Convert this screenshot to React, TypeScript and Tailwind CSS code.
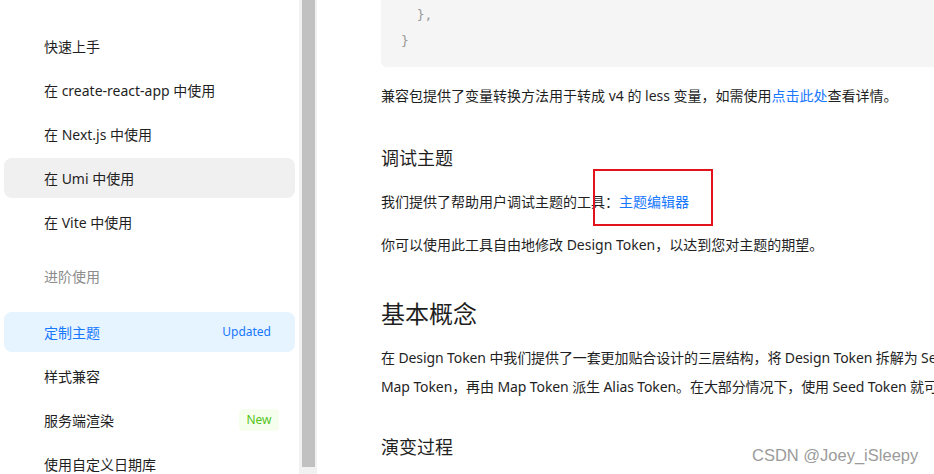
import React from "react";

const font = { fontFamily: '"Noto Sans", "Noto Sans CJK SC", sans-serif' };

function Item({ label, active, selected, badge }: { label: string; active?: boolean; selected?: boolean; badge?: React.ReactNode }) {
  return (
    <div
      className={
        "mx-[4px] mb-[4px] h-[40px] rounded-[8px] pl-[40px] pr-[16px] flex items-center justify-between text-[14px] " +
        (selected ? "bg-[#e6f4ff] text-[#1677ff]" : active ? "bg-[#f0f0f0] text-[#1f1f1f]" : "text-[#1f1f1f]")
      }
    >
      <span>{label}</span>
      {badge}
    </div>
  );
}

export default function App() {
  return (
    <div className="w-[934px] h-[474px] overflow-hidden flex bg-white relative" style={font}>
      {/* Sidebar */}
      <div className="w-[299px] shrink-0 flex flex-col">
        <div className="mt-[14px] ml-[44px] w-[219px] h-px bg-[#f0f0f0]" />
        <div className="mt-[12px]">
          <Item label="快速上手" />
          <Item label="在 create-react-app 中使用" />
          <Item label="在 Next.js 中使用" />
          <Item label="在 Umi 中使用" active />
          <Item label="在 Vite 中使用" />
        </div>
        <div className="mt-[20px] pl-[44px] h-[22px] leading-[22px] text-[14px] text-[#8c8c8c]">进阶使用</div>
        <div className="mt-[12px] ml-[44px] w-[219px] h-px bg-[#f0f0f0]" />
        <div className="mt-[12px]">
          <Item
            label="定制主题"
            selected
            badge={<span className="px-[8px] text-[12px] text-[#1677ff]">Updated</span>}
          />
          <Item label="样式兼容" />
          <Item
            label="服务端渲染"
            badge={
              <span className="w-[40px] h-[22px] rounded-[4px] bg-[#f6ffed] text-[#52c41a] text-[12px] flex items-center justify-center">
                New
              </span>
            }
          />
          <Item label="使用自定义日期库" />
        </div>
      </div>

      {/* Scrollbar */}
      <div className="w-[18px] shrink-0 bg-[#f1f1f1] pl-[3px] pr-[2px]">
        <div className="h-[467px] bg-[#c1c1c1]" />
      </div>

      {/* Main */}
      <div className="flex-1 min-w-0 overflow-hidden pl-[64px] text-[#1f1f1f]">
        <div className="w-[700px]">
          <div
            className="mt-[-10px] pt-[12px] pb-[13px] pl-[20px] bg-[#f5f5f5] rounded-[6px] text-[13px] leading-[26px] text-[#999]"
            style={{ fontFamily: '"DejaVu Sans Mono", monospace' }}
          >
            <div className="whitespace-pre">{"  },"}</div>
            <div className="whitespace-pre">{"}"}</div>
          </div>
          <p className="mt-[15px] text-[14px] leading-[28px] whitespace-nowrap">
            兼容包提供了变量转换方法用于转成 v4 的 less 变量，如需使用<span className="text-[#1677ff]">点击此处</span>查看详情。
          </p>
          <h3 className="mt-[34px] text-[18px] leading-[28px] font-normal">调试主题</h3>
          <p className="mt-[16px] text-[14px] leading-[28px] whitespace-nowrap">
            我们提供了帮助用户调试主题的工具：
            <span className="relative text-[#1677ff]">
              主题编辑器
              <span className="absolute left-[-26px] top-[-23px] w-[120px] h-[57px] border-2 border-[#e3131b]" />
            </span>
          </p>
          <p className="mt-[15px] text-[14px] leading-[28px] whitespace-nowrap">
            你可以使用此工具自由地修改 Design Token，以达到您对主题的期望。
          </p>
          <h2 className="mt-[39px] text-[24px] leading-[32px] font-normal">基本概念</h2>
          <p className="mt-[13px] text-[14px] leading-[29px] whitespace-nowrap tracking-[-0.1px]">
            在 Design Token 中我们提供了一套更加贴合设计的三层结构，将 Design Token 拆解为 Seed Token、Map Token 和 Alias Token 三部分。
            <br />
            Map Token，再由 Map Token 派生 Alias Token。在大部分情况下，使用 Seed Token 就可以满足定制主题的需要。
          </p>
          <h3 className="mt-[32px] text-[18px] leading-[28px] font-normal">演变过程</h3>
        </div>
      </div>

      {/* Watermark */}
      <div
        className="absolute left-[752px] top-[444px] text-[16.5px] leading-[22px] text-[#9b9b9b] whitespace-nowrap"
        style={{ fontFamily: '"Liberation Sans", sans-serif', textShadow: "0 0 2px #fff" }}
      >
        CSDN @Joey_iSleepy
      </div>
    </div>
  );
}
